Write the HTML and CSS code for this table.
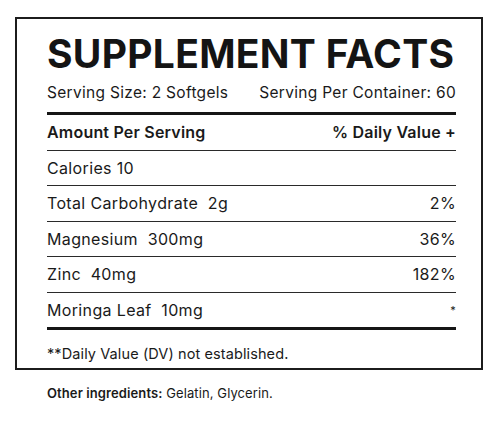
FILE: index.html
```html
<!DOCTYPE html>
<html lang="en">
<head>
  <meta charset="UTF-8">
  <meta name="viewport" content="width=device-width, initial-scale=1.0">
  <title>Supplement Facts</title>
  <link rel="stylesheet" href="styles.css">
</head>
<body>
  <div class="facts-label">
    <h1 class="facts-title">SUPPLEMENT FACTS</h1>
    <div class="serving-info">
      <span>Serving Size: 2 Softgels</span>
      <span>Serving Per Container: 60</span>
    </div>

    <div class="facts-row header-row">
      <span>Amount Per Serving</span>
      <span>% Daily Value +</span>
    </div>
    <div class="facts-row">
      <span>Calories 10</span>
      <span></span>
    </div>
    <div class="facts-row">
      <span>Total Carbohydrate&nbsp; 2g</span>
      <span>2%</span>
    </div>
    <div class="facts-row">
      <span>Magnesium&nbsp; 300mg</span>
      <span>36%</span>
    </div>
    <div class="facts-row">
      <span>Zinc&nbsp; 40mg</span>
      <span>182%</span>
    </div>
    <div class="facts-row last-row">
      <span>Moringa Leaf&nbsp; 10mg</span>
      <span class="asterisk">*</span>
    </div>

    <div class="footnote">**Daily Value (DV) not established.</div>
  </div>

  <p class="other-ingredients"><strong>Other ingredients:</strong> Gelatin, Glycerin.</p>
</body>
</html>
```

FILE: styles.css
```css
body {
  margin: 0;
  padding: 0;
  background-color: #ffffff;
  color: #1a1a1a;
  font-family: "Inter", "Liberation Sans", sans-serif;
}

.facts-label {
  width: 468px;
  box-sizing: border-box;
  margin: 17px 0 0 15px;
  padding: 13px 25px 0 30px;
  border: 2px solid #1c1c1c;
  height: 353px;
}

.facts-title {
  margin: 0;
  font-size: 39px;
  line-height: 44px;
  font-weight: 700;
  letter-spacing: 0.3px;
  color: #141414;
}

.serving-info {
  display: flex;
  justify-content: space-between;
  font-size: 15.5px;
  letter-spacing: 0.3px;
  line-height: 20px;
  margin-top: 7px;
  padding-bottom: 9px;
  border-bottom: 3px solid #161616;
}

.facts-row {
  display: flex;
  justify-content: space-between;
  align-items: center;
  height: 34.5px;
  font-size: 16px;
  letter-spacing: 0.35px;
  border-bottom: 1px solid #2a2a2a;
}

.header-row {
  font-weight: 600;
  letter-spacing: 0.2px;
}

.last-row {
  border-bottom: 3px solid #161616;
}

.asterisk {
  font-size: 11px;
}

.footnote {
  font-size: 14.5px;
  letter-spacing: 0.1px;
  line-height: 20px;
  margin-top: 14px;
}

.other-ingredients {
  margin: 15px 0 0 47px;
  font-size: 13px;
  letter-spacing: 0.1px;
}

.other-ingredients strong {
  font-weight: 600;
}
```
